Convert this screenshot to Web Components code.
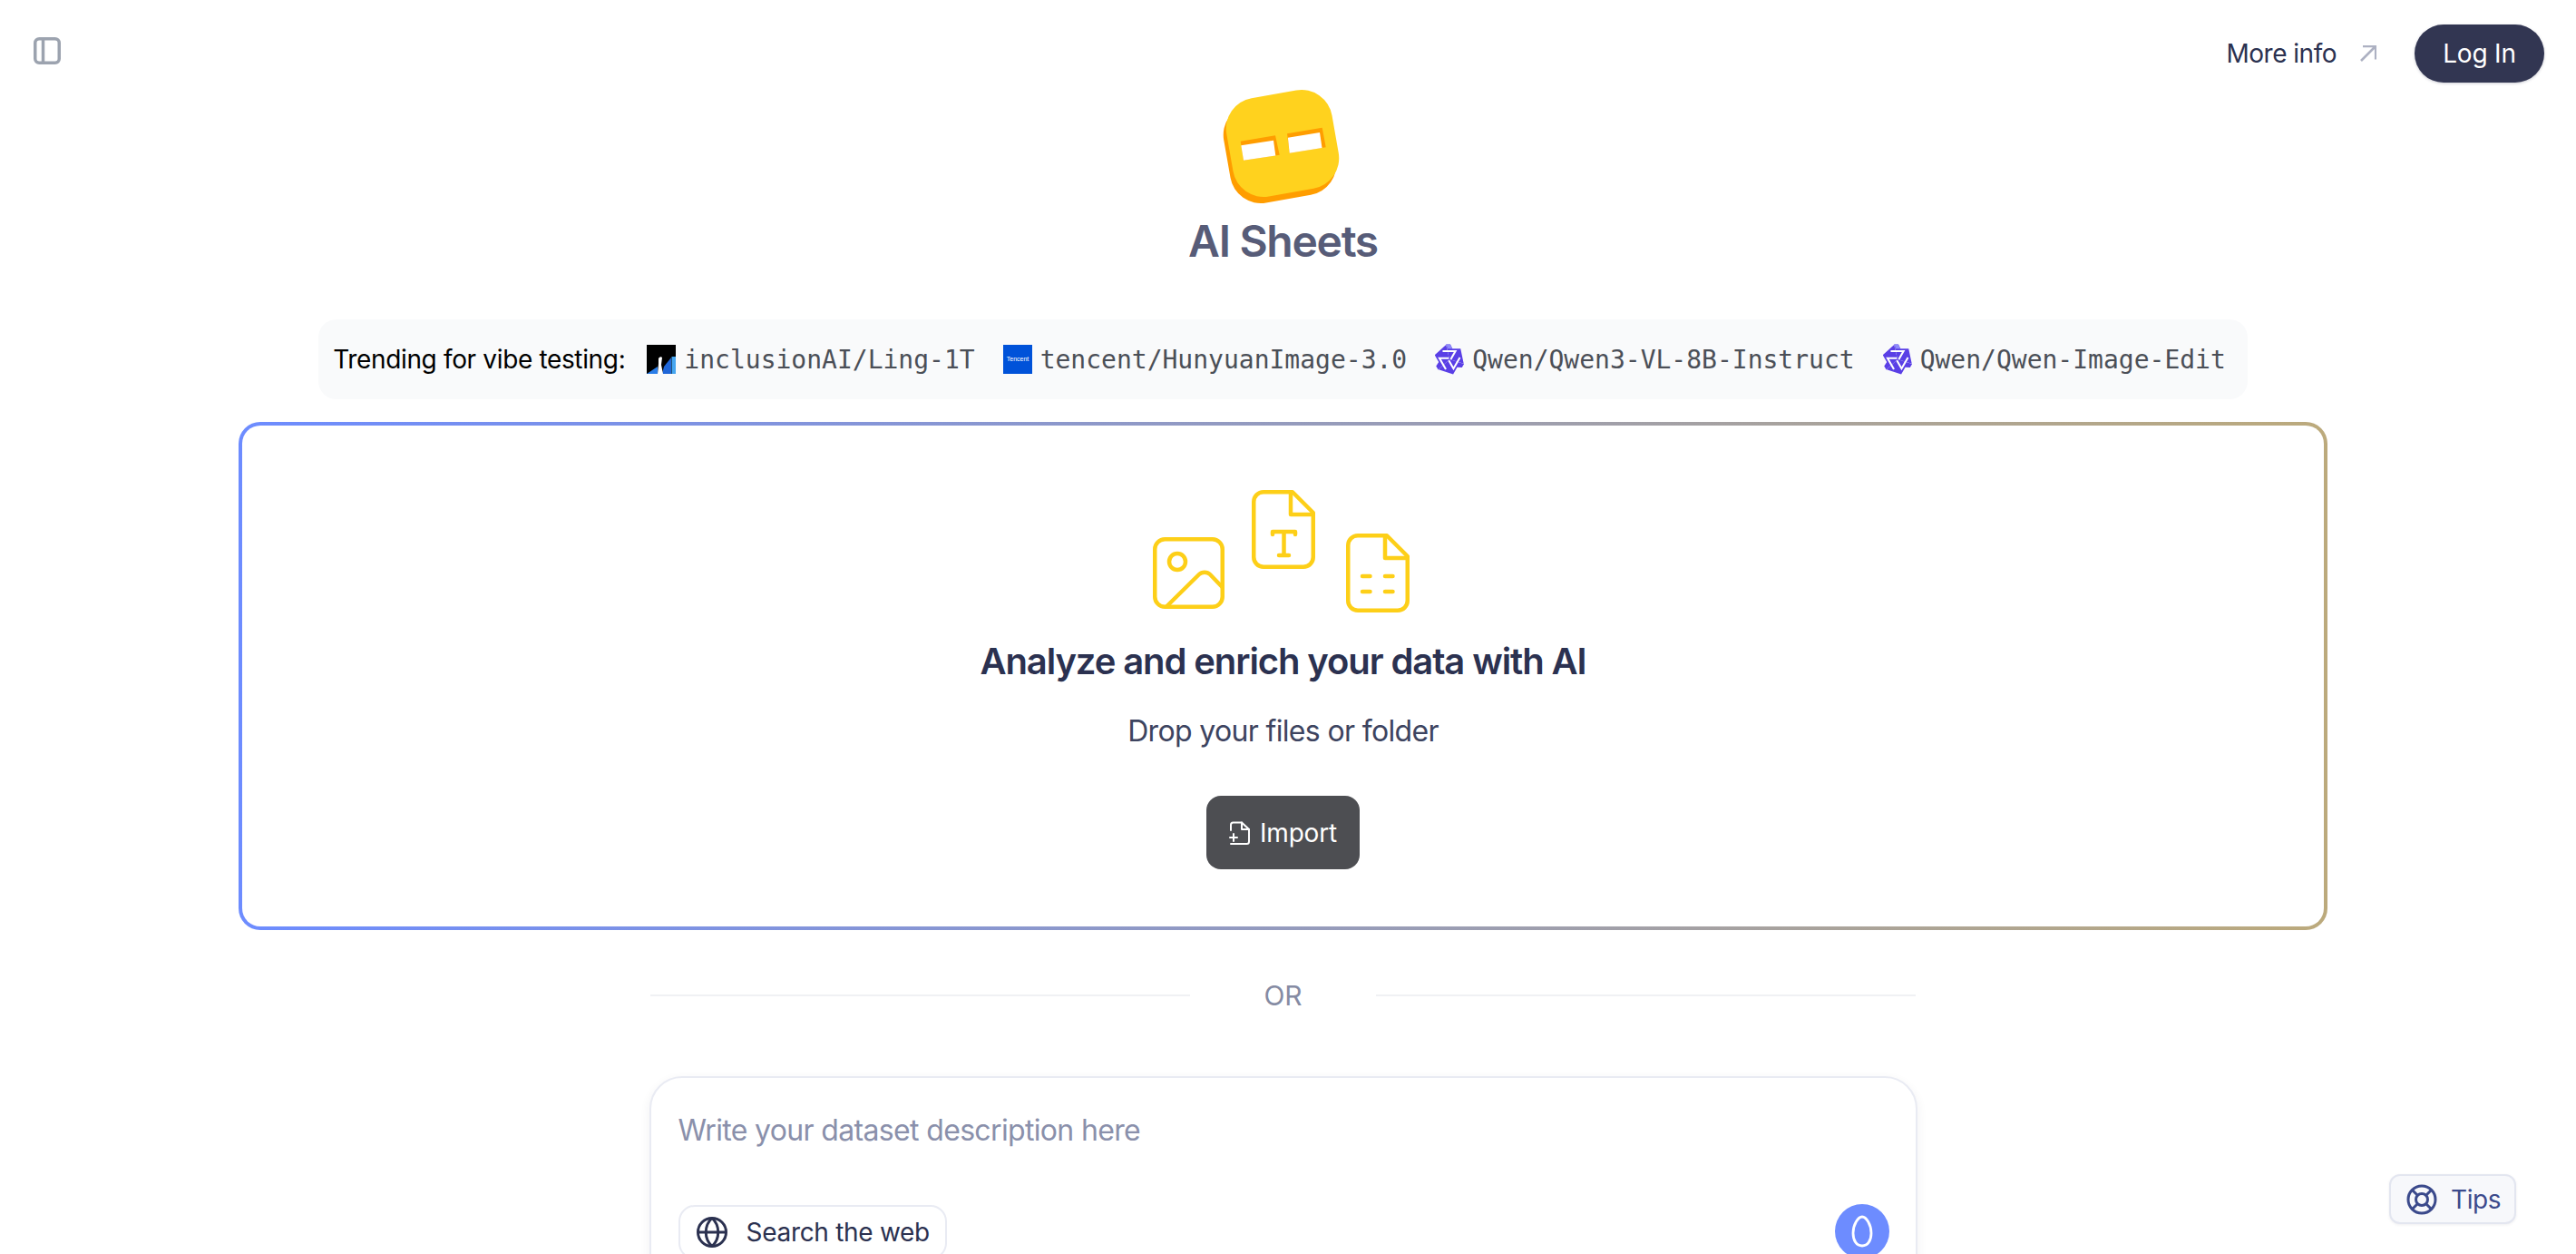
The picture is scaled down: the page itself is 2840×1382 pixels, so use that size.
<!DOCTYPE html>
<html>
<head>
<meta charset="utf-8">
<title>AI Sheets</title>
<style>
  html, body { margin: 0; height: 100%; overflow: hidden; background: #fff; }
  body { font-family: Inter, "Liberation Sans", sans-serif; color: #2b3150; }
</style>
</head>
<body>
<sheets-page>
  <page-header></page-header>
  <main-column>
    <brand-block></brand-block>
    <trending-bar>
      <trending-item label="inclusionAI/Ling-1T" logo="ling"></trending-item>
      <trending-item label="tencent/HunyuanImage-3.0" logo="tencent"></trending-item>
      <trending-item label="Qwen/Qwen3-VL-8B-Instruct" logo="qwen"></trending-item>
      <trending-item label="Qwen/Qwen-Image-Edit" logo="qwen"></trending-item>
    </trending-bar>
    <drop-zone></drop-zone>
    <or-divider></or-divider>
    <prompt-card></prompt-card>
  </main-column>
  <tips-button></tips-button>
</sheets-page>

<script>
// Small helper so every element sets up its shadow root the same way
function shadow(el, html) {
  el.attachShadow({ mode: 'open' });
  el.shadowRoot.innerHTML = html;
}

class SheetsPage extends HTMLElement {
  constructor() {
    super();
    shadow(this, `
      <style>
        :host { display: block; position: relative; height: 1382px; overflow: hidden; }
      </style>
      <slot></slot>
    `);
  }
}
customElements.define('sheets-page', SheetsPage);

class PageHeader extends HTMLElement {
  constructor() {
    super();
    shadow(this, `
      <style>
        :host { display: flex; justify-content: space-between; align-items: flex-start; padding: 27px 35px 0 37px; }
        .toggle { display: block; margin-top: 14px; }
        .right { display: flex; align-items: center; }
        .more { font-size: 28px; letter-spacing: -0.5px; color: #2b3150; display: flex; align-items: center; gap: 26px; margin-right: 42px; }
        .login { height: 64px; width: 143px; border-radius: 32px; background: #323652; color: #fff; font-size: 28px; letter-spacing: -0.2px;
          display: flex; align-items: center; justify-content: center; box-shadow: 0 1px 3px rgba(50,54,82,.25); }
      </style>
      <svg class="toggle" width="30" height="30" viewBox="0 0 30 30" fill="none" stroke="#9ca3af" stroke-width="3.5">
        <rect x="1.75" y="1.75" width="26.5" height="26.5" rx="4.5"/>
        <path d="M10.5 2v26"/>
      </svg>
      <div class="right">
        <div class="more">More info
          <svg width="18" height="18" viewBox="0 0 18 18" fill="none" stroke="#adb1c2" stroke-width="2.6">
            <path d="M1 17 17 1M3 1h14.2v14.5"/>
          </svg>
        </div>
        <div class="login">Log In</div>
      </div>
    `);
  }
}
customElements.define('page-header', PageHeader);

class MainColumn extends HTMLElement {
  constructor() {
    super();
    shadow(this, `
      <style>
        :host { display: flex; flex-direction: column; align-items: center; width: 2829px; }
      </style>
      <slot></slot>
    `);
  }
}
customElements.define('main-column', MainColumn);

class BrandBlock extends HTMLElement {
  constructor() {
    super();
    shadow(this, `
      <style>
        :host { display: flex; flex-direction: column; align-items: center; margin-top: 4px; }
        svg { display: block; }
        h1 { margin: 10px 0 0; font-size: 48px; line-height: 58px; font-weight: 600; color: #575c78; letter-spacing: -1.3px; }
      </style>
      <svg width="140" height="132" viewBox="1345 95 140 132">
        <rect x="1352" y="110" width="118" height="110" rx="34" fill="#ff9d00" transform="rotate(-10 1411 165)"/>
        <rect x="1355" y="103" width="118" height="110" rx="34" fill="#ffd21e" transform="rotate(-10 1414 158)"/>
        <path d="M1367.7 155.700 1406 149.300 1410.700 170.700 1371 176.700z" fill="#ff9d00"/>
        <path d="M1368.300 160.200 1404 154.700 1406.300 171.600 1371 176.700z" fill="#fff"/>
        <path d="M1419 147.300 1457.700 140.700 1461.700 162.300 1421.700 168.700z" fill="#ff9d00"/>
        <path d="M1419.900 151.700 1455 146 1457.500 163 1421.700 168.700z" fill="#fff"/>
      </svg>
      <h1>AI Sheets</h1>
    `);
  }
}
customElements.define('brand-block', BrandBlock);

class TrendingBar extends HTMLElement {
  constructor() {
    super();
    shadow(this, `
      <style>
        :host { display: flex; align-items: center; height: 88px; box-sizing: border-box; padding: 0 24px 0 16px;
          margin-top: 57px; background: #f9fafb; border-radius: 20px; }
        .label { font-size: 28px; letter-spacing: -0.35px; color: #000; margin-right: 24px; white-space: nowrap; }
        .items { display: flex; align-items: center; gap: 31px; }
      </style>
      <span class="label">Trending for vibe testing:</span>
      <div class="items"><slot></slot></div>
    `);
  }
}
customElements.define('trending-bar', TrendingBar);

// Three identical sectors turned around the centre make the Qwen knot
const QWEN_TURNS = [0, 120, 240];
const LOGOS = {
  ling: `<svg width="32" height="32" viewBox="0 0 32 32">
      <rect width="32" height="32" fill="#000"/>
      <path d="M0 32 12 24v8z" fill="#2a7de8"/>
      <path d="M17 32 19 24 27 14v18z" fill="#1f66d8"/>
      <path d="M27.500 13H32v19h-4.500z" fill="#46a6f0"/>
      <path d="M12 32 13 21V15q2-3 4-1l-1 8 2 10z" fill="#fff"/>
    </svg>`,
  tencent: `<svg width="32" height="32" viewBox="0 0 32 32">
      <rect width="32" height="32" fill="#0052d9"/>
      <text x="16" y="18" text-anchor="middle" font-family="Liberation Sans, sans-serif" font-size="7" fill="#fff">Tencent</text>
    </svg>`,
  qwen: `<svg width="32" height="36" viewBox="-17 -19 34 38">
      ${QWEN_TURNS.map(a => `<path transform="rotate(${a})" d="M0 0-4-17.500 1-17.500 3.500-12.500 13-12.500 16.700 5z" fill="#5a3fe6"/>`).join('')}
      ${QWEN_TURNS.map(a => `<path transform="rotate(${a})" d="M-8-9.500H7L1.500 0" fill="none" stroke="#fff" stroke-width="2.200"/>`).join('')}
      <path d="M-4-17.500 1-17.500 3.500-12.500-2-12.500z" fill="#8e8afa"/>
    </svg>`
};

class TrendingItem extends HTMLElement {
  connectedCallback() {
    if (this.shadowRoot) return;
    shadow(this, `
      <style>
        :host { display: flex; align-items: center; gap: 9px; }
        svg { display: block; flex: none; }
        span { font-family: "DejaVu Sans Mono", monospace; font-size: 28px; color: #4b4f57; white-space: nowrap; }
      </style>
      ${LOGOS[this.getAttribute('logo')]}
      <span>${this.getAttribute('label')}</span>
    `);
  }
}
customElements.define('trending-item', TrendingItem);

class DropZone extends HTMLElement {
  constructor() {
    super();
    shadow(this, `
      <style>
        :host { display: flex; flex-direction: column; align-items: center; box-sizing: border-box; width: 2303px; height: 560px;
          margin-top: 25px; border: 4px solid transparent; border-radius: 24px;
          background: linear-gradient(#fff, #fff) padding-box, linear-gradient(90deg, #6d8cff, #bcaa7c) border-box; }
        .art { display: flex; align-items: flex-start; gap: 30px; margin: 71px 4px 0 0; height: 135px; }
        .art svg { display: block; }
        .image { margin-top: 52px; } .table { margin-top: 48px; margin-left: 4px; }
        h2 { margin: 30px 0 0; font-size: 40px; line-height: 48px; font-weight: 600; color: #2b3150; letter-spacing: -1.1px; }
        p { margin: 33px 0 0; font-size: 32px; line-height: 40px; color: #3d4460; letter-spacing: -0.66px; }
        .import { margin-top: 51px; width: 169px; height: 81px; border-radius: 16px; background: #4d4e52; color: #fff; font-size: 28px; letter-spacing: -0.2px;
          display: flex; align-items: center; justify-content: center; gap: 10px; }
      </style>
      <div class="art">
        <svg class="image" width="79" height="79" viewBox="0 0 79 79" fill="none" stroke="#fdcf18" stroke-width="4.500" stroke-linecap="round" stroke-linejoin="round">
          <rect x="2.250" y="2.250" width="74.500" height="74.500" rx="11"/>
          <circle cx="27" cy="27" r="9"/>
          <path d="M15 76.500 51 41c3-3 9-3 12 0L76.500 55"/>
        </svg>
        <svg class="up" width="70" height="87" viewBox="0 0 70 87" fill="none" stroke="#fdcf18" stroke-width="4.500" stroke-linecap="round" stroke-linejoin="round">
          <path d="M45 2.250H13C7 2.250 2.250 7 2.250 13v61c0 6 4.750 10.750 10.750 10.750h44c6 0 10.750-4.750 10.750-10.750V25z"/>
          <path d="M43 2.250V27h24.500"/>
          <path d="M23 49v-3h25v3M35.500 46v26M30 72h11"/>
        </svg>
        <svg class="table" width="70" height="87" viewBox="0 0 70 87" fill="none" stroke="#fdcf18" stroke-width="4.500" stroke-linecap="round" stroke-linejoin="round">
          <path d="M45 2.250H13C7 2.250 2.250 7 2.250 13v61c0 6 4.750 10.750 10.750 10.750h44c6 0 10.750-4.750 10.750-10.750V25z"/>
          <path d="M43 2.250V27h24.500"/>
          <path d="M18 47h8.500M43 47h8.500M18 64h8.500M43 64h8.500"/>
        </svg>
      </div>
      <h2>Analyze and enrich your data with AI</h2>
      <p>Drop your files or folder</p>
      <div class="import">
        <svg width="24" height="26" viewBox="0 0 24 26" fill="none" stroke="#fff" stroke-width="2" stroke-linecap="round" stroke-linejoin="round">
          <path d="M2 10V4c0-1.500 1-2.500 2.500-2.500H14L22 9v13.500c0 1.500-1 2.500-2.500 2.500H2"/>
          <path d="M14 1.500V9h8M1 18h8M5 14v8"/>
        </svg>
        Import
      </div>
    `);
  }
}
customElements.define('drop-zone', DropZone);

class OrDivider extends HTMLElement {
  constructor() {
    super();
    shadow(this, `
      <style>
        :host { display: flex; align-items: center; width: 1395px; height: 40px; margin-top: 52px; }
        i { flex: 1; height: 2px; background: #f0f1f4; }
        span { width: 205px; text-align: center; font-size: 30px; color: #858ba3; }
      </style>
      <i></i><span>OR</span><i></i>
    `);
  }
}
customElements.define('or-divider', OrDivider);

class PromptCard extends HTMLElement {
  constructor() {
    super();
    shadow(this, `
      <style>
        :host { display: block; box-sizing: border-box; width: 1398px; height: 250px; margin-top: 69px; padding: 38px 29px 0 30px;
          border: 2px solid #e9ebf3; border-radius: 36px; box-shadow: 0 4px 12px rgba(40,44,70,.07); background: #fff; }
        .hint { font-size: 32px; line-height: 40px; color: #8a90ab; letter-spacing: -0.66px; }
        .row { display: flex; justify-content: space-between; align-items: flex-start; margin-top: 62px; }
        .search { display: flex; align-items: center; gap: 21px; box-sizing: border-box; width: 296px; height: 60px; padding-left: 18px;
          border: 2px solid #e9ebf3; border-radius: 18px; font-size: 28px; letter-spacing: -0.3px; color: #2b3150; }
        .send { width: 60px; height: 60px; margin-top: -1px; border-radius: 50%; background: #6d8cff; display: flex; align-items: center; justify-content: center; }
        svg { display: block; }
      </style>
      <div class="hint">Write your dataset description here</div>
      <div class="row">
        <div class="search">
          <svg width="34" height="34" viewBox="0 0 34 34" fill="none" stroke="#2b3150" stroke-width="3">
            <circle cx="17" cy="17" r="15.500"/>
            <path d="M1.500 17h31M17 1.500c-9 8-9 23 0 31M17 1.500c9 8 9 23 0 31"/>
          </svg>
          Search the web
        </div>
        <div class="send">
          <svg width="26" height="36" viewBox="0 0 26 36" fill="none" stroke="#fff" stroke-width="2.800">
            <path d="M13 2c4.500 0 10 8.500 10 18 0 8.500-4 14-10 14S3 28.500 3 20C3 10.500 8.500 2 13 2z"/>
          </svg>
        </div>
      </div>
    `);
  }
}
customElements.define('prompt-card', PromptCard);

class TipsButton extends HTMLElement {
  constructor() {
    super();
    shadow(this, `
      <style>
        :host { position: absolute; left: 2634px; top: 1294px; box-sizing: border-box; width: 140px; height: 55px; display: flex; align-items: center; gap: 15px; padding-left: 17px;
          background: #f7f8fb; border: 2px solid #e3e6f0; border-radius: 12px; font-size: 28px; letter-spacing: -0.4px; color: #3b4a8c; box-shadow: 0 1px 3px rgba(40,44,70,.08); }
        svg { display: block; }
      </style>
      <svg width="34" height="34" viewBox="0 0 34 34" fill="none" stroke="#3b4a8c" stroke-width="3">
        <circle cx="17" cy="17" r="15"/>
        <circle cx="17" cy="17" r="6.500"/>
        <path d="M6.500 6.500 12.500 12.500M27.500 6.500 21.500 12.500M6.500 27.500 12.500 21.500M27.500 27.500 21.500 21.500"/>
      </svg>
      Tips
    `);
  }
}
customElements.define('tips-button', TipsButton);
</script>
</body>
</html>
